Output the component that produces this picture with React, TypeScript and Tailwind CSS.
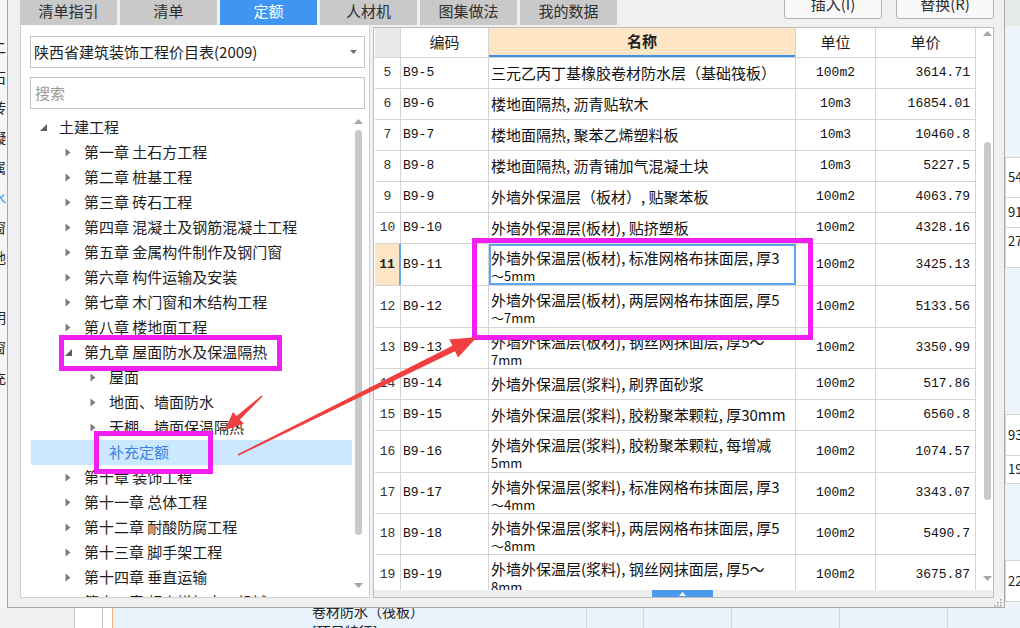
import React from 'react';

const CJK = "font-['Noto_Sans_CJK_SC',sans-serif]";
const MONO = "font-['Liberation_Mono','Noto_Sans_CJK_SC',monospace]";

type TreeItem = { lvl: 0 | 1 | 2; t: string; icon: 'open' | 'closed' | 'none'; sel?: boolean };

const tree: TreeItem[] = [
  { lvl: 0, t: '土建工程', icon: 'open' },
  { lvl: 1, t: '第一章 土石方工程', icon: 'closed' },
  { lvl: 1, t: '第二章 桩基工程', icon: 'closed' },
  { lvl: 1, t: '第三章 砖石工程', icon: 'closed' },
  { lvl: 1, t: '第四章 混凝土及钢筋混凝土工程', icon: 'closed' },
  { lvl: 1, t: '第五章 金属构件制作及钢门窗', icon: 'closed' },
  { lvl: 1, t: '第六章 构件运输及安装', icon: 'closed' },
  { lvl: 1, t: '第七章 木门窗和木结构工程', icon: 'closed' },
  { lvl: 1, t: '第八章 楼地面工程', icon: 'closed' },
  { lvl: 1, t: '第九章 屋面防水及保温隔热', icon: 'open' },
  { lvl: 2, t: '屋面', icon: 'closed' },
  { lvl: 2, t: '地面、墙面防水', icon: 'closed' },
  { lvl: 2, t: '天棚、墙面保温隔热', icon: 'closed' },
  { lvl: 2, t: '补充定额', icon: 'none', sel: true },
  { lvl: 1, t: '第十章 装饰工程', icon: 'closed' },
  { lvl: 1, t: '第十一章 总体工程', icon: 'closed' },
  { lvl: 1, t: '第十二章 耐酸防腐工程', icon: 'closed' },
  { lvl: 1, t: '第十三章 脚手架工程', icon: 'closed' },
  { lvl: 1, t: '第十四章 垂直运输', icon: 'closed' },
  { lvl: 1, t: '第十五章 超高增加人工机械', icon: 'closed' },
];

const lvlPad = ['pl-0', 'pl-[25px]', 'pl-[50px]'];

type Row = { n: number; code: string; name: string[]; unit: string; price: string; h: string };

const rows: Row[] = [
  { n: 5, code: 'B9-5', name: ['三元乙丙丁基橡胶卷材防水层（基础筏板）'], unit: '100m2', price: '3614.71', h: 'h-[31px]' },
  { n: 6, code: 'B9-6', name: ['楼地面隔热, 沥青贴软木'], unit: '10m3', price: '16854.01', h: 'h-[31px]' },
  { n: 7, code: 'B9-7', name: ['楼地面隔热, 聚苯乙烯塑料板'], unit: '10m3', price: '10460.8', h: 'h-[31px]' },
  { n: 8, code: 'B9-8', name: ['楼地面隔热, 沥青铺加气混凝土块'], unit: '10m3', price: '5227.5', h: 'h-[31px]' },
  { n: 9, code: 'B9-9', name: ['外墙外保温层（板材）, 贴聚苯板'], unit: '100m2', price: '4063.79', h: 'h-[31px]' },
  { n: 10, code: 'B9-10', name: ['外墙外保温层(板材), 贴挤塑板'], unit: '100m2', price: '4328.16', h: 'h-[31px]' },
  { n: 11, code: 'B9-11', name: ['外墙外保温层(板材), 标准网格布抹面层, 厚3', '～5mm'], unit: '100m2', price: '3425.13', h: 'h-[42px]' },
  { n: 12, code: 'B9-12', name: ['外墙外保温层(板材), 两层网格布抹面层, 厚5', '～7mm'], unit: '100m2', price: '5133.56', h: 'h-[42px]' },
  { n: 13, code: 'B9-13', name: ['外墙外保温层(板材), 钢丝网抹面层, 厚5～', '7mm'], unit: '100m2', price: '3350.99', h: 'h-[41px]' },
  { n: 14, code: 'B9-14', name: ['外墙外保温层(浆料), 刷界面砂浆'], unit: '100m2', price: '517.86', h: 'h-[31px]' },
  { n: 15, code: 'B9-15', name: ['外墙外保温层(浆料), 胶粉聚苯颗粒, 厚30mm'], unit: '100m2', price: '6560.8', h: 'h-[31px]' },
  { n: 16, code: 'B9-16', name: ['外墙外保温层(浆料), 胶粉聚苯颗粒, 每增减', '5mm'], unit: '100m2', price: '1074.57', h: 'h-[42px]' },
  { n: 17, code: 'B9-17', name: ['外墙外保温层(浆料), 标准网格布抹面层, 厚3', '～4mm'], unit: '100m2', price: '3343.07', h: 'h-[41px]' },
  { n: 18, code: 'B9-18', name: ['外墙外保温层(浆料), 两层网格布抹面层, 厚5', '～8mm'], unit: '100m2', price: '5490.7', h: 'h-[41px]' },
  { n: 19, code: 'B9-19', name: ['外墙外保温层(浆料), 钢丝网抹面层, 厚5～', '8mm'], unit: '100m2', price: '3675.87', h: 'h-[41px]' },
];

function Tri({ icon }: { icon: TreeItem['icon'] }) {
  if (icon === 'closed')
    return (
      <svg width="6" height="9" viewBox="0 0 6 9">
        <path d="M0.5 0.5 L5.5 4.5 L0.5 8.5Z" fill="#7d7d7d" />
      </svg>
    );
  if (icon === 'open')
    return (
      <svg width="7" height="7" viewBox="0 0 7 7">
        <path d="M7 0 L7 7 L0 7Z" fill="#5c5c5c" />
      </svg>
    );
  return null;
}

function UpArrow({ color = '#a6a6a6' }: { color?: string }) {
  return (
    <svg width="9" height="5" viewBox="0 0 9 5">
      <path d="M0 5 L4.5 0 L9 5Z" fill={color} />
    </svg>
  );
}
function DownArrow({ color = '#a6a6a6' }: { color?: string }) {
  return (
    <svg width="9" height="5" viewBox="0 0 9 5">
      <path d="M0 0 L4.5 5 L9 0Z" fill={color} />
    </svg>
  );
}

const tabs = ['清单指引', '清单', '定额', '人材机', '图集做法', '我的数据'];

const leftChars = ['二', '石', '砖', '凝', '属', '水', '窗', '地', '', '明', '窗', '充'];

function LeftStrip() {
  return (
    <div className="w-[7px] h-full bg-[#f6f6f6] overflow-hidden pt-[32px] flex flex-col">
      {leftChars.map((c, i) => (
        <div
          key={i}
          className={`h-[30px] leading-[30px] text-[14px] -ml-[8px] whitespace-nowrap ${c === '水' ? 'text-[#3d98f0]' : 'text-[#222]'}`}
        >
          {c}
        </div>
      ))}
    </div>
  );
}

function RightStrip() {
  return (
    <div className="w-[15px] h-full flex flex-col bg-[#eef4fc] text-[13px] text-[#222] overflow-hidden">
      <div className="h-[26px] bg-[#e7ebe7]" />
      <div className="h-[131px]" />
      <div className="h-[40px] bg-white border-t border-l border-[#d4d4d4] pl-[2px] leading-[38px] whitespace-nowrap">54</div>
      <div className="h-[30px] bg-white border-t border-l border-[#d4d4d4] pl-[2px] leading-[28px] whitespace-nowrap">91</div>
      <div className="h-[41px] bg-white border-t border-b border-l border-[#d4d4d4] pl-[2px] leading-[26px] whitespace-nowrap">27</div>
      <div className="h-[146px]" />
      <div className="h-[41px] bg-white border-t border-l border-[#d4d4d4] pl-[2px] leading-[40px] whitespace-nowrap">93</div>
      <div className="h-[29px] bg-white border-t border-b border-l border-[#d4d4d4] pl-[2px] leading-[26px] whitespace-nowrap">19</div>
      <div className="h-[76px]" />
      <div className="h-[42px] bg-white border-t border-b border-l border-[#d4d4d4] pl-[2px] leading-[40px] whitespace-nowrap">22</div>
    </div>
  );
}

function BottomStrip() {
  return (
    <div className="h-[20px] flex text-[14px] text-[#222] overflow-hidden">
      <div className="w-[75px] bg-[#f0f0f0] border-r border-[#c8c8c8]" />
      <div className="w-[28px] bg-white border-r border-[#c8c8c8]" />
      <div className="w-[10px] bg-white border-r border-[#f2b36b]" />
      <div className="w-[474px] bg-[#eaf2fc] border-r border-[#d0d8e2] pl-[199px] -mt-[7px] flex flex-col">
        <div className="leading-[20px] whitespace-nowrap">卷材防水（筏板）</div>
        <div className="leading-[20px] whitespace-nowrap">[项目特征]</div>
      </div>
      <div className="w-[57px] bg-[#eaf2fc] border-r border-[#d0d8e2]" />
      <div className="w-[88px] bg-[#eaf2fc] border-r border-[#d0d8e2]" />
      <div className="w-[108px] bg-[#eaf2fc] border-r border-[#d0d8e2]" />
      <div className="w-[108px] bg-[#eaf2fc] border-r border-[#d0d8e2]" />
      <div className="flex-1 bg-[#eaf2fc]" />
    </div>
  );
}

function LeftPanel() {
  return (
    <div className="w-[350px] h-[573px] bg-white border-l border-r border-b border-[#cfcfcf] flex flex-col">
      <div className="ml-[9px] mt-[11px] w-[335px] h-[32px] border border-[#c4c4c4] flex items-center pl-[3px] pr-[7px] text-[15px] text-[#1e1e1e]">
        <span className="flex-1 whitespace-nowrap">陕西省建筑装饰工程价目表(2009)</span>
        <svg width="7" height="4" viewBox="0 0 7 4">
          <path d="M0 0 L3.5 4 L7 0Z" fill="#707070" />
        </svg>
      </div>
      <div className="ml-[9px] mt-[9px] w-[335px] h-[32px] border border-[#c4c4c4] flex items-center pl-[4px] text-[15px] text-[#9a9a9a]">
        搜索
      </div>
      <div className="mt-[6px] flex flex-1 min-h-0">
        <div className="ml-[10px] w-[321px] overflow-hidden">
          {tree.map((it, i) => (
            <div
              key={i}
              className={`flex items-center h-[25px] ${lvlPad[it.lvl]} ${it.sel ? 'bg-[#cce8ff] text-[#3b83dd]' : 'text-[#1e1e1e]'}`}
            >
              <div className="w-[28px] pl-[9px] flex items-center">
                <Tri icon={it.icon} />
              </div>
              <span className="text-[15px] whitespace-nowrap">{it.t}</span>
            </div>
          ))}
        </div>
        <div className="ml-[1px] w-[11px] flex flex-col items-center">
          <div className="h-[12px] flex items-center">
            <UpArrow />
          </div>
          <div className="mt-[3px] w-[7px] h-[405px] rounded-full bg-[#c9c9c9]" />
          <div className="flex-1" />
          <div className="h-[14px] flex items-start">
            <DownArrow />
          </div>
        </div>
      </div>
    </div>
  );
}

function Table() {
  return (
    <div className="mt-[2px] w-[621px] h-[571px] border border-[#bdbdbd] bg-white flex flex-col">
      <div className="flex h-[562px]">
        <div className="pl-[1px] w-[602px] overflow-hidden">
          {/* header */}
          <div className="flex h-[30px] border-b border-[#d4d4d4] text-[15px] text-[#1e1e1e]">
            <div className="w-[26px] bg-[#e9e9e9] border-r border-[#d4d4d4]" />
            <div className="w-[88px] border-r border-[#d4d4d4] flex items-center justify-center">编码</div>
            <div className="w-[307px] border-r border-[#d4d4d4] bg-[#fde5c6] flex flex-col">
              <div className="flex-1 flex items-center justify-center font-bold">名称</div>
              <div className="h-[2px] bg-[#3f90e6]" />
            </div>
            <div className="w-[80px] border-r border-[#d4d4d4] flex items-center justify-center">单位</div>
            <div className="w-[100px] border-r border-[#d4d4d4] flex items-center justify-center">单价</div>
          </div>
          {rows.map((r) => {
            const cur = r.n === 11;
            return (
              <div key={r.n} className={`flex ${r.h} border-b border-[#d4d4d4] text-[#111]`}>
                <div
                  className={`w-[26px] border-r flex items-center justify-center ${MONO} text-[13px] ${
                    cur ? 'bg-[#fde5c6] border-[#5da6f3] border-r-2 font-bold text-[#222]' : 'border-[#d4d4d4] text-[#333]'
                  }`}
                >
                  {r.n}
                </div>
                <div className={`w-[88px] border-r border-[#d4d4d4] flex items-center pl-[2px] ${MONO} text-[13px]`}>
                  {r.code}
                </div>
                <div
                  className={`w-[307px] border-r border-[#d4d4d4] flex flex-col ${
                    r.name.length > 1 ? 'justify-start pt-[5px]' : 'justify-center'
                  } pl-[2px] text-[15px] ${cur ? 'outline-2 -outline-offset-2 outline-[#5da6f3]' : ''}`}
                >
                  {r.name.map((l, i) => (
                    <div
                      key={i}
                      className={`whitespace-nowrap ${i === 0 ? 'leading-[18px]' : 'mt-[1px] leading-[16px] text-[13px]'}`}
                    >
                      {l}
                    </div>
                  ))}
                </div>
                <div className={`w-[80px] border-r border-[#d4d4d4] flex items-center justify-center ${MONO} text-[13px]`}>
                  {r.unit}
                </div>
                <div className={`w-[100px] border-r border-[#d4d4d4] flex items-center justify-end pr-[5px] ${MONO} text-[13px]`}>
                  {r.price}
                </div>
              </div>
            );
          })}
        </div>
        <div className="w-[6px]" />
        <div className="w-[11px] flex flex-col items-center">
          <div className="h-[10px] flex items-center">
            <UpArrow />
          </div>
          <div className="mt-[104px] w-[7px] h-[358px] rounded-full bg-[#c9c9c9]" />
          <div className="flex-1" />
          <div className="h-[14px] flex items-start">
            <DownArrow />
          </div>
        </div>
      </div>
      <div className="h-[7px] bg-[#efefef] flex">
        <div className="ml-[278px] w-[61px] h-[7px] bg-[#4a9bef] flex items-center justify-center">
          <svg width="7" height="4" viewBox="0 0 7 4">
            <path d="M0 4 L3.5 0 L7 4Z" fill="#ffffff" />
          </svg>
        </div>
      </div>
    </div>
  );
}

function Dialog() {
  return (
    <div className="w-[998px] h-[608px] bg-[#f0f0f0] border-l border-r border-b border-[#a9a9a9] flex flex-col">
      <div className="h-[25px] flex pl-[12px] pr-[10px]">
        <div className="flex gap-[3px]">
          {tabs.map((t) => (
            <div
              key={t}
              className={`w-[97px] h-[25px] flex items-start justify-center pt-[1px] text-[15px] leading-[19px] ${
                t === '定额' ? 'bg-[#3f96f2] text-white' : 'bg-[#c9c9c9] text-[#2e2e2e]'
              }`}
            >
              {t}
            </div>
          ))}
        </div>
        <div className="flex-1" />
        <div className="flex gap-[14px]">
          <div className="-mt-[11px] w-[98px] h-[30px] rounded-[3px] border border-[#b4b4b4] bg-[#f8f8f8] flex items-center justify-center text-[15px] text-[#2e2e2e]">
            插入(I)
          </div>
          <div className="-mt-[11px] w-[98px] h-[30px] rounded-[3px] border border-[#b4b4b4] bg-[#f8f8f8] flex items-center justify-center text-[15px] text-[#2e2e2e]">
            替换(R)
          </div>
        </div>
      </div>
      <div className="h-[573px] flex pl-[12px]">
        <LeftPanel />
        <div className="w-[3px]" />
        <Table />
      </div>
      <div className="h-[9px] flex justify-end pr-[2px] pt-[1px]">
        <svg width="8" height="8" viewBox="0 0 8 8">
          <rect x="6" y="0" width="1.5" height="1.5" fill="#9a9a9a" />
          <rect x="3" y="3" width="1.5" height="1.5" fill="#9a9a9a" />
          <rect x="6" y="3" width="1.5" height="1.5" fill="#9a9a9a" />
          <rect x="0" y="6" width="1.5" height="1.5" fill="#9a9a9a" />
          <rect x="3" y="6" width="1.5" height="1.5" fill="#9a9a9a" />
          <rect x="6" y="6" width="1.5" height="1.5" fill="#9a9a9a" />
        </svg>
      </div>
    </div>
  );
}

export default function App() {
  return (
    <div className={`relative w-[1020px] h-[628px] overflow-hidden bg-[#f3f3f3] ${CJK}`}>
      <div className="flex h-[608px]">
        <LeftStrip />
        <Dialog />
        <RightStrip />
      </div>
      <BottomStrip />
      <svg className="absolute left-0 top-0 pointer-events-none" width="1020" height="628" viewBox="0 0 1020 628">
        <rect x="61.5" y="337.5" width="218" height="31" fill="none" stroke="#f21ff2" strokeWidth="5" />
        <rect x="96.5" y="433.5" width="114" height="38" fill="none" stroke="#f21ff2" strokeWidth="5" />
        <rect x="474.5" y="240.5" width="336" height="97" fill="none" stroke="#f21ff2" strokeWidth="5" />
        <polygon
          points="238.4,455.7 455,351.2 458.1,357.5 477,337 449.3,339.5 452.4,345.8 237.6,454.3"
          fill="#f03f3f"
        />
        <polygon
          points="262.5,396.5 240,419.6 243.7,423.7 225,430 232.9,411.9 236.6,416 261.5,395.5"
          fill="#f03f3f"
        />
      </svg>
    </div>
  );
}
